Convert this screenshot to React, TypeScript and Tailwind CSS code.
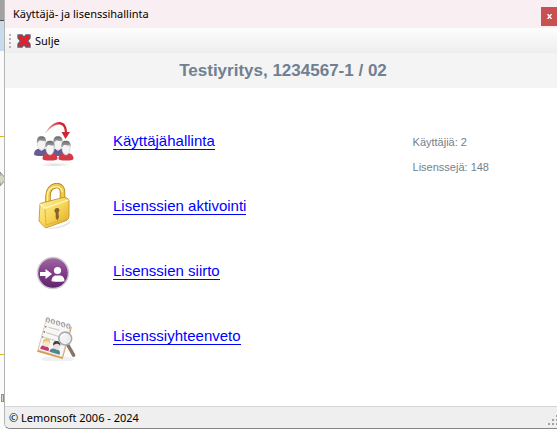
import type { ReactNode } from "react";

interface MenuItem {
  label: string;
  icon: ReactNode;
}

function UsersIcon() {
  return (
    <svg aria-hidden="true" className="h-12 w-12" viewBox="0 0 48 48">
      <defs>
        <linearGradient id="hair" x1="0" x2="0" y1="0" y2="1">
          <stop offset="0" stopColor="#686868" />
          <stop offset="1" stopColor="#b0b0b0" />
        </linearGradient>
        <radialGradient id="floor">
          <stop offset="0" stopColor="#dcdcdc" />
          <stop offset="1" stopColor="#ffffff" />
        </radialGradient>
        <linearGradient id="arc" x1="0" x2="1" y1="0" y2="0">
          <stop offset="0" stopColor="#eba9ac" />
          <stop offset=".6" stopColor="#cf2733" />
        </linearGradient>
      </defs>
      <ellipse cx="24" cy="47" fill="url(#floor)" rx="16" ry="2.500" />
      {[
        { x: 10.5, y: 24, body: "#625c97" },
        { x: 27, y: 24, body: "#625c97" },
        { x: 19, y: 28.5, body: "#d23a48" },
        { x: 35, y: 28.5, body: "#d23a48" },
      ].map(({ x, y, body }) => (
        <g key={x} transform={`translate(${x} ${y})`}>
          <path d="M-7.500 12c0-3 2-5 5-5.500h5c3 .5 5 2.500 5 5.500 0 1.500-2 2-7.500 2s-7.500-.5-7.500-2z" fill={body} />
          <path d="M-3 6.500 0 9l3-2.500V4h-6z" fill="#e4e2e4" />
          <ellipse cx="0" cy="2.500" fill="#f5f4f4" rx="4" ry="5.500" stroke="#cccacc" strokeWidth=".6" />
          <path d="M-4.600 1c-.5-5 1.600-6.800 4.600-6.800S5.100-4 4.600 1L3.700-1.200C1-.8-1-2-2-1.500L-3.800.5z" fill="url(#hair)" />
        </g>
      ))}
      <path
        d="M14 16C19 10 25 5 30 7c2.500.8 3.500 3 3.800 7h-3.300l4 7 4.500-7h-3C35.700 8.500 34 5 30 4.200 23.500 3 17.500 9 14 16z"
        fill="url(#arc)"
      />
    </svg>
  );
}

function PadlockIcon() {
  return (
    <svg aria-hidden="true" className="h-12 w-12" viewBox="0 1 48 48">
      <defs>
        <linearGradient id="lockBody" x1="0" x2="1" y1="0" y2="1">
          <stop offset="0" stopColor="#fff3a2" />
          <stop offset=".5" stopColor="#f8d75b" />
          <stop offset="1" stopColor="#dfa51f" />
        </linearGradient>
      </defs>
      <path d="M13 46c9 1 19-2 27-7l-2 3c-7 4-16 6-25 4z" fill="#e2e2e2" />
      <path d="M17 22v-8C17 2 31.500 0 31.500 10v9" fill="none" stroke="#b58726" strokeWidth="5.500" />
      <path d="M17 22v-8C17 2 31.500 0 31.500 10v9" fill="none" stroke="#eecb50" strokeWidth="3.800" />
      <path d="M16.500 19v-6C17 3 30 2 31.500 10" fill="none" stroke="#fff0a0" strokeWidth="1.400" />
      <path d="M9 21.500 32 15.500q5-.5 6 2.500L38 34q0 3-2.500 4.500L16 45.500q-2 .5-3-1L8 39z" fill="url(#lockBody)" stroke="#bd8b20" strokeWidth=".8" />
      <path d="m9 22 5 4L37.500 18" fill="none" stroke="#fff9c9" strokeWidth="1.300" />
      <path d="m14 27 1 17M15 43l20-6" fill="none" stroke="#e2b235" />
      <path d="M26 26a2.200 2.200 0 0 1 1.500 4v2l.5 3-1.500 3.500-1.800-2.500v-5A2.700 2.700 0 0 1 26 26z" fill="#85632a" />
    </svg>
  );
}

function TransferIcon() {
  return (
    <svg aria-hidden="true" className="h-12 w-12" viewBox="0 0 48 48">
      <defs>
        <linearGradient id="disc" x1="0" x2="0" y1="0" y2="1">
          <stop offset="0" stopColor="#a06ba3" />
          <stop offset=".5" stopColor="#823b89" />
          <stop offset="1" stopColor="#5c266c" />
        </linearGradient>
      </defs>
      <circle cx="22" cy="25" fill="url(#disc)" r="15.500" stroke="#d0cad1" strokeWidth="1.500" />
      <path d="M9 24h5.500v-3l6.500 5-6.500 5v-3H9z" fill="#fff" />
      <circle cx="26.500" cy="22.500" fill="#fff" r="3.600" />
      <path d="M20.500 33c0-3.500 2-5.500 5-5.500h3c3 0 5 2 5 5.500 0 1-13 1-13 0z" fill="#fff" />
    </svg>
  );
}

function SummaryIcon() {
  return (
    <svg aria-hidden="true" className="h-12 w-12" viewBox="-1 -2 47 47">
      <ellipse cx="25" cy="43" fill="#f0f0f0" rx="16" ry="3" />
      <path d="m14 4 25 8-9 31L5 36z" fill="#d99a4a" />
      <path d="m14 4 24 7-8.500 30L6 34z" fill="#f8f7f3" stroke="#d5cec1" strokeWidth=".7" />
      {[15, 20, 25, 30, 35].map((x, i) => (
        <path
          key={x}
          d={`M${x} ${7 + i * 1.5}c-2-2-1-5 1-4s1 3 0 4.500`}
          fill="none"
          stroke="#a4a4a9"
          strokeWidth="1.100"
        />
      ))}
      <path d="m16 12 11 3M14 17l12 4M12 22l11 3" fill="none" stroke="#c9c7c7" />
      <g fill="#666">
        <circle cx="13.500" cy="11.500" r=".8" />
        <circle cx="12" cy="16.500" r=".8" />
        <circle cx="10.500" cy="21.500" r=".8" />
      </g>
      <path d="M8 33c1-4 4-4 7-2 2 1 2 3 1 4.500z" fill="#c03c75" />
      <circle cx="14" cy="27.500" fill="#f6e6ca" r="3.500" />
      <path d="M10.500 27.500c0-4 2-5 4.500-4.500s3.500 2 2.500 5c-1-3-4-3-7-.5z" fill="#e8c96a" />
      <path d="M17 36c1-4 4-4 7-2 3 0 4 2 3 5z" fill="#4a8791" />
      <circle cx="24" cy="30" fill="#e9dedb" r="3.300" />
      <path d="M20.500 30c0-4 2-5 4-4.500s4 2 3 5c-1-3-4-3-7-.5z" fill="#3f3f43" />
      <path d="m33 29 3-1.500 6.500 11.500q0 3-3 1.500z" fill="#8a7468" />
      <circle cx="32.500" cy="23" fill="#eef1f4" fillOpacity=".9" r="6.300" stroke="#a9abb0" strokeWidth="1.600" />
      <path d="M28.500 22c.5-2.500 2-3.500 4-3.500" fill="none" stroke="#fff" strokeWidth="1.500" />
    </svg>
  );
}

const menuItems: MenuItem[] = [
  { label: "Käyttäjähallinta", icon: <UsersIcon /> },
  { label: "Lisenssien aktivointi", icon: <PadlockIcon /> },
  { label: "Lisenssien siirto", icon: <TransferIcon /> },
  { label: "Lisenssiyhteenveto", icon: <SummaryIcon /> },
];

// Sliver of the window that lies behind the dialog
function BackdropEdge() {
  return (
    <div aria-hidden="true" className="flex w-1 shrink-0 flex-col overflow-hidden bg-[#fafafa]">
      <div className="h-5 bg-[#a1a1a1]" />
      <div className="h-px bg-[#4b4b4b]" />
      <div className="h-[30px] bg-[#c8dbec]" />
      <div className="mt-[85px] h-px bg-[#e3b51c]" />
      <svg className="mt-[34px] h-4 w-1" viewBox="0 0 4 16">
        <path d="M0 1v4h-1v6h1v4l6-7z" fill="#d5d8c3" stroke="#8b8b84" />
      </svg>
      <div className="mt-[167px] h-px bg-[#e3b51c]" />
      <div className="mt-[39px] ml-px h-2 border border-[#8f9289] bg-[#d5d8c3]" />
    </div>
  );
}

function TitleBar() {
  return (
    <header className="flex h-7 items-center justify-between bg-[#f9eef2] pl-2">
      <h1 className="font-['Noto_Sans',sans-serif] text-[11px] leading-4 text-black">Käyttäjä- ja lisenssihallinta</h1>
      <button
        aria-label="Sulje ikkuna"
        className="mt-1 flex h-[19px] w-4 items-center justify-center bg-[#c75050]"
        type="button"
      >
        <svg className="h-[5px] w-[5px]" viewBox="0 0 5 5">
          <path d="m.5 0 4 5m0-5-4 5" stroke="#fff" strokeWidth="1.400" />
        </svg>
      </button>
    </header>
  );
}

function Toolbar() {
  return (
    <div className="flex h-[25px] items-center bg-linear-to-b from-[#fdfdfd] to-[#eeeeee] pl-1" role="toolbar">
      <svg aria-hidden="true" className="h-[14px] w-[2px]" viewBox="0 0 2 14">
        <path d="M0 0h2v2H0zM0 4h2v2H0zM0 8h2v2H0zM0 12h2v2H0z" fill="#b5b5b5" />
      </svg>
      <button className="ml-[6px] flex items-center gap-1 font-['Noto_Sans',sans-serif] text-[11px] leading-4 text-black" type="button">
        <svg aria-hidden="true" className="h-[14px] w-[14px]" viewBox="0 0 14 14">
          <path
            d="M1 1h4l2 2.500L9 1h4v3l-2.500 3 2.500 3v3H9l-2-2.500L5 13H1v-3l2.500-3L1 4z"
            fill="#e81e2b"
            stroke="#65586b"
            strokeWidth="1.300"
          />
        </svg>
        Sulje
      </button>
    </div>
  );
}

function StatusBar() {
  return (
    <footer className="flex h-[22px] items-center justify-between border-t border-[#d4d4d4] bg-[#efefef] pl-1">
      <span className="font-['Noto_Sans',sans-serif] text-[11px] leading-4 text-black">© Lemonsoft 2006 - 2024</span>
      <svg aria-hidden="true" className="h-[13px] w-[9px] self-end" viewBox="0 0 9 13">
        <path d="M8 0h2v2H8zM4 4h2v2H4zM8 4h2v2H8zM0 8h2v2H0zM4 8h2v2H4zM8 8h2v2H8z" fill="#a0a0a0" />
      </svg>
    </footer>
  );
}

export default function App() {
  return (
    <div className="flex min-h-screen bg-[#fafafa]">
      <BackdropEdge />
      <div className="flex min-w-0 flex-1 flex-col overflow-hidden rounded-bl-md border-b border-l border-b-[#858585] border-l-[#b4b4b4] bg-white">
        <TitleBar />
        <Toolbar />
        <h2 className="bg-[#f4f4f4] pt-[6px] pb-[5px] pl-1 text-center font-['Liberation_Sans',Arial,sans-serif] text-[17px] leading-6 font-bold text-[#708090]">
          Testiyritys, 1234567-1 / 02
        </h2>
        <main className="flex flex-1 justify-between pt-[21px] pr-[68px] pl-[26px] font-['Liberation_Sans',Arial,sans-serif]">
          <nav>
            <ul>
              {menuItems.map(({ label, icon }) => (
                <li key={label} className="flex h-[65px] items-center gap-[34px]">
                  {icon}
                  <a className="border-b border-[#0000ff] text-[15px] leading-4 text-[#0000ff]" href="#">
                    {label}
                  </a>
                </li>
              ))}
            </ul>
          </nav>
          <div className="pt-[21px] text-[11px] leading-[25px] text-[#76808a]">
            <p>Käyttäjiä: 2</p>
            <p>Lisenssejä: 148</p>
          </div>
        </main>
        <StatusBar />
      </div>
    </div>
  );
}
